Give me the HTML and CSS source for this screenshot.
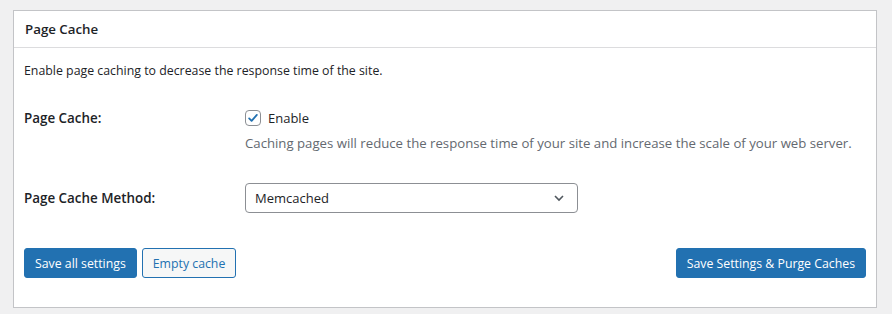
FILE: index.html
```html
<!DOCTYPE html>
<html lang="en">
<head>
  <meta charset="UTF-8">
  <title>Page Cache</title>
  <link rel="stylesheet" href="styles.css">
</head>
<body>
  <div class="postbox">
    <h2 class="postbox-title">Page Cache</h2>
    <div class="inside">
      <p class="intro">Enable page caching to decrease the response time of the site.</p>

      <div class="form-row row-cache">
        <div class="label">Page Cache:</div>
        <div class="field">
          <label class="check">
            <span class="checkbox">
              <svg width="14" height="14" viewBox="0 0 20 20"><path d="M4.5 10.5l3.5 3.5 7.5-8.5" fill="none" stroke="#2271b1" stroke-width="2.6" stroke-linecap="round" stroke-linejoin="round"/></svg>
            </span>
            Enable
          </label>
          <p class="description">Caching pages will reduce the response time of your site and increase the scale of your web server.</p>
        </div>
      </div>

      <div class="form-row row-method">
        <div class="label">Page Cache Method:</div>
        <div class="field">
          <div class="select">
            <span>Memcached</span>
            <svg width="12" height="8" viewBox="0 0 12 8"><path d="M2 2l4 4 4-4" fill="none" stroke="#50575e" stroke-width="1.6"/></svg>
          </div>
        </div>
      </div>

      <div class="actions">
        <div class="actions-left">
          <button class="button button-primary">Save all settings</button>
          <button class="button button-secondary">Empty cache</button>
        </div>
        <button class="button button-primary">Save Settings &amp; Purge Caches</button>
      </div>
    </div>
  </div>
</body>
</html>
```

FILE: styles.css
```css
* {
  margin: 0;
  padding: 0;
  box-sizing: border-box;
}

body {
  background: #f0f0f1;
  font-family: "Open Sans", sans-serif;
  font-size: 13px;
  color: #1d2327;
  padding: 10px 15px 0 13px;
}

.postbox {
  background: #fff;
  border: 1px solid #c3c4c7;
  width: 864px;
  height: 298px;
}

.postbox-title {
  font-size: 13.3px;
  font-weight: 600;
  padding: 0 11px;
  height: 37px;
  line-height: 36px;
  border-bottom: 1px solid #dcdcde;
}

.inside {
  padding: 0 10px;
}

.intro {
  margin-top: 14px;
  font-size: 12.35px;
  line-height: 18px;
}

.form-row {
  display: flex;
}

.row-cache {
  margin-top: 29px;
}

.row-method {
  margin-top: 31px;
  align-items: center;
}

.label {
  width: 221px;
  font-size: 13.4px;
  font-weight: 600;
  line-height: 18px;
}

.check {
  display: flex;
  align-items: center;
  gap: 7px;
  line-height: 18px;
}

.checkbox {
  width: 16px;
  height: 16px;
  border: 1px solid #8c8f94;
  border-radius: 4px;
  display: flex;
  align-items: center;
  justify-content: center;
}

.description {
  color: #646970;
  font-size: 13.2px;
  margin-top: 7px;
  line-height: 18px;
}

.select {
  width: 333px;
  height: 30px;
  border: 1px solid #8c8f94;
  border-radius: 4px;
  padding: 0 12px 0 9px;
  display: flex;
  align-items: center;
  justify-content: space-between;
}

.actions {
  margin-top: 35px;
  display: flex;
  justify-content: space-between;
}

.actions-left {
  display: flex;
  gap: 5px;
}

.button {
  font-family: inherit;
  font-size: 12.3px;
  height: 30px;
  padding: 0 10px;
  border-radius: 3px;
  border: 1px solid #2271b1;
  cursor: pointer;
}

.button-primary {
  background: #2271b1;
  color: #fff;
}

.button-secondary {
  background: #f6f7f7;
  color: #2271b1;
}
```
